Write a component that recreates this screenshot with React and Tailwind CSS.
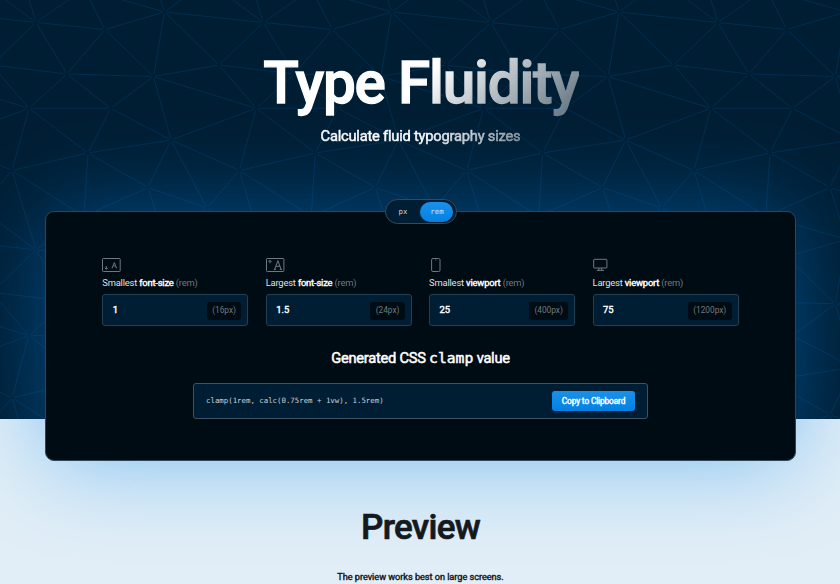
import React from 'react';

// Size of one repeat of the triangle mesh.
const P = 227.3;

const EDGES = [
  [36, 22.5, -20.3, -19.3], [36, 22.5, 12, -56.8], [36, 22.5, 84, -11], [36, 22.5, 105, 29.5],
  [36, 22.5, -62.8, 12], [36, 22.5, 67, 74], [36, 22.5, -8.3, 65],
  [105, 29.5, 164.5, 12], [105, 29.5, 67, 74], [105, 29.5, 153.5, 76.5], [105, 29.5, 84, -11],
  [164.5, 12, 84, -11], [164.5, 12, 148, -39.8], [164.5, 12, 207, -19.3], [164.5, 12, 153.5, 76.5],
  [164.5, 12, 219, 65], [219, 65, 153.5, 76.5], [219, 65, 256.3, 108.3], [219, 65, 294.3, 74],
  [67, 74, 153.5, 76.5], [67, 74, 29, 108.3], [67, 74, 110.5, 108.3],
  [153.5, 76.5, 110.5, 108.3], [153.5, 76.5, 171, 140], [153.5, 76.5, 256.3, 108.3],
  [29, 108.3, 110.5, 108.3], [29, 108.3, 12, 170.5], [29, 108.3, 88, 153], [29, 108.3, -56.3, 140],
  [110.5, 108.3, 171, 140], [110.5, 108.3, 88, 153],
  [171, 140, 88, 153], [171, 140, 148, 187.5], [171, 140, 207, 208], [171, 140, 239.3, 170.5],
  [88, 153, 12, 170.5], [88, 153, 84, 216.3], [88, 153, 148, 187.5],
  [12, 170.5, 84, 216.3], [12, 170.5, -20.3, 208],
  [148, 187.5, 84, 216.3], [148, 187.5, 207, 208],
];

// Each edge stops just short of its two vertices.
const MESH = EDGES.map(([x1, y1, x2, y2]) => {
  const d = Math.hypot(x2 - x1, y2 - y1);
  const ux = ((x2 - x1) / d) * 2;
  const uy = ((y2 - y1) / d) * 2;
  return `M${x1 + ux} ${y1 + uy}L${x2 - ux} ${y2 - uy}`;
}).join('');

function Mesh() {
  const tiles = [];
  for (let r = 0; r < 3; r++) for (let c = -1; c < 5; c++) tiles.push([c * P, r * P]);
  return (
    <svg className="absolute inset-0 h-full w-full" fill="none" stroke="#0084f0" strokeOpacity="0.15" strokeWidth="1">
      {tiles.map(([x, y]) => (
        <path key={`${x}-${y}`} d={MESH} transform={`translate(${x} ${y})`} />
      ))}
    </svg>
  );
}

const iconClass = 'block h-[14px] stroke-[#7d858b]';

function SmallFontIcon() {
  return (
    <svg className={`${iconClass} w-[19px]`} viewBox="0 0 19 14" fill="none" strokeWidth="0.9">
      <rect x="0.5" y="0.5" width="17.7" height="13" rx="0.8" />
      <path d="M4.3 8v3.2M2.8 9.8l1.5 1.5 1.5-1.5" />
      <path d="M10.3 9.6l2-5.1 2 5.1M11 7.9h2.6M9.7 9.7h1.3M13.7 9.7h1.3" strokeWidth="0.8" />
    </svg>
  );
}

function LargeFontIcon() {
  return (
    <svg className={`${iconClass} w-[19px]`} viewBox="0 0 19 14" fill="none" strokeWidth="0.9">
      <rect x="0.5" y="0.5" width="17.4" height="13" rx="0.8" />
      <path d="M4 5.4V2.4M2.5 3.9L4 2.4l1.5 1.5" />
      <path d="M8.7 11.3l3.2-8.6 3.2 8.6M9.8 8.3h4.2M7.8 11.4h2.2M13.8 11.4H16" strokeWidth="0.9" />
    </svg>
  );
}

function PhoneIcon() {
  return (
    <svg className={`${iconClass} w-[14px]`} viewBox="0 0 14 14" fill="none" strokeWidth="0.9">
      <rect x="2.6" y="0.5" width="8.4" height="13" rx="1.3" />
      <path d="M6.3 2h1" />
    </svg>
  );
}

function DesktopIcon() {
  return (
    <svg className={`${iconClass} w-[15px]`} viewBox="0 0 15 14" fill="none" strokeWidth="0.9">
      <rect x="0.7" y="1.3" width="13.2" height="8.7" rx="0.6" />
      <path d="M5.9 10v2.3M8.7 10v2.3M3.7 12.4h7.2" />
    </svg>
  );
}

const FIELDS = [
  { Icon: SmallFontIcon, size: 'Smallest', what: 'font-size', value: '1', px: '(16px)' },
  { Icon: LargeFontIcon, size: 'Largest', what: 'font-size', value: '1.5', px: '(24px)' },
  { Icon: PhoneIcon, size: 'Smallest', what: 'viewport', value: '25', px: '(400px)' },
  { Icon: DesktopIcon, size: 'Largest', what: 'viewport', value: '75', px: '(1200px)' },
];

// Emboldens the regular cut without changing its advance widths.
const heavy = 'font-normal [-webkit-text-stroke:0.4px_currentColor]';

function Field({ Icon, size, what, value, px }) {
  return (
    <div className="flex flex-col">
      <Icon />
      <div className="mt-[5px] h-[11px] whitespace-nowrap text-[9.4px] leading-[11px] tracking-[-0.02em] text-[#dfe3e6]">
        {size} <b className={`${heavy} text-white`}>{what}</b> <span className="text-[#71787e]">(rem)</span>
      </div>
      <div className="mt-[6px] flex h-8 items-center justify-between rounded-[3px] border border-[#213f55] bg-[#001e33] pl-[9.5px] pr-[6px]">
        <span className={`text-[9.4px] text-white ${heavy}`}>{value}</span>
        <span className="mt-px flex h-[18px] items-center rounded-[3px] bg-[#000c14] px-[5.5px] text-[8.3px] text-[#71787e]">{px}</span>
      </div>
    </div>
  );
}

const mono = "font-['DejaVu_Sans_Mono',monospace]";

export default function App() {
  return (
    <div className="relative h-[584px] w-full overflow-hidden bg-[#e1eef7] font-['Roboto',sans-serif]">
      <div className="absolute inset-x-0 top-0 h-[419px] overflow-hidden bg-[#001e33]">
        <Mesh />
      </div>
      <div className="relative flex flex-col items-center pl-px">
        <h1 className="mt-[47px] bg-linear-[135deg,#fff_50%,#ffffff59] bg-clip-text pl-px text-[58.5px] font-medium leading-[72px] tracking-[-0.021em] text-transparent [-webkit-text-stroke:1.3px_transparent]">
          Type Fluidity
        </h1>
        <p className="mt-[8px] bg-linear-[135deg,#fff_50%,#ffffff80] bg-clip-text text-[14.7px] font-normal leading-[18px] tracking-[-0.015em] text-transparent [-webkit-text-stroke:0.6px_transparent]">
          Calculate fluid typography sizes
        </p>
        <section className="mt-[66px] flex h-[250px] w-[751px] flex-col items-center rounded-[9px] border border-[#2d4656] bg-[#000c14] shadow-[0_0_92px_rgba(0,132,234,0.45)]">
          <div className="-mt-[13px] flex h-[25px] w-[72px] shrink-0 items-center rounded-full border-[1.5px] border-[#34495a] bg-[#001e33] pl-[1px] pr-[3px]">
            <span className={`flex-1 text-center text-[7.4px] text-[#ccd2d6] ${mono}`}>px</span>
            <span className={`flex h-5 w-[33px] items-center justify-center rounded-full bg-linear-to-b from-[#1a90e8] to-[#0082e4] pl-[2px] text-[7.4px] text-[#cce6fa] ${mono}`}>rem</span>
          </div>
          <div className="mt-[34px] grid w-[636.5px] grid-cols-4 gap-[17.2px]">
            {FIELDS.map((f) => <Field key={f.value} {...f} />)}
          </div>
          <h2 className="mt-[22px] text-[14.7px] font-normal leading-5 tracking-[-0.018em] text-white [-webkit-text-stroke:0.5px_currentColor]">
            Generated CSS <code className={`${mono} tracking-normal`}>clamp</code> value
          </h2>
          <div className="mt-[15px] flex h-9 w-[455px] items-center justify-between rounded-[3px] border border-[#3d5362] bg-[#001e33] px-3">
            <code className={`text-[7.38px] text-[#ccd2d6] ${mono}`}>clamp(1rem, calc(0.75rem + 1vw), 1.5rem)</code>
            <button className={`h-5 w-[83px] whitespace-nowrap rounded-[3px] bg-linear-to-b from-[#1a90e8] to-[#0082e4] text-[8.3px] tracking-[-0.015em] text-white ${heavy}`}>
              Copy to Clipboard
            </button>
          </div>
        </section>
        <h2 className="mt-[44px] text-[35px] font-medium leading-[46px] tracking-[-0.021em] text-[#13191d] [-webkit-text-stroke:0.7px_currentColor]">Preview</h2>
        <p className={`mt-[20px] text-[9.2px] leading-3 tracking-[-0.005em] text-[#13191d] ${heavy}`}>The preview works best on large screens.</p>
      </div>
    </div>
  );
}
